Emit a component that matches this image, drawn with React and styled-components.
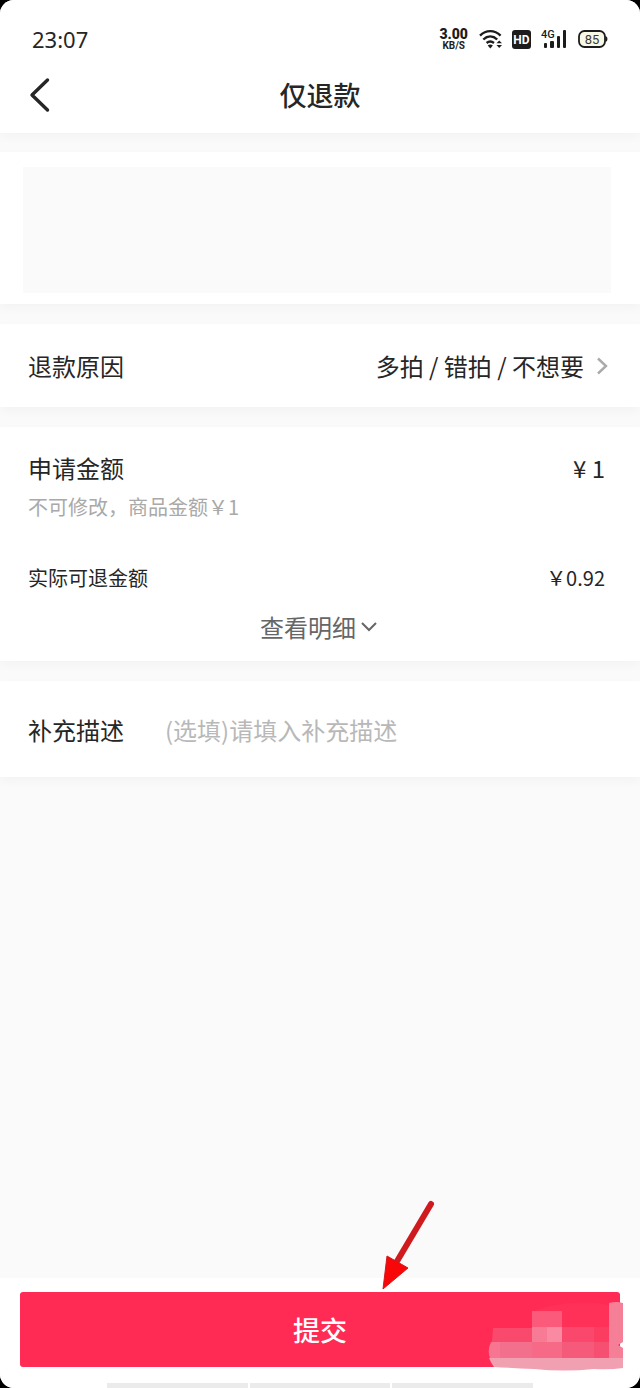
import styled, { createGlobalStyle } from "styled-components";

const GlobalStyle = createGlobalStyle`
  *, *::before, *::after {
    box-sizing: border-box;
  }

  body {
    margin: 0;
    background-color: #000;
    font-family: "Noto Sans CJK SC", "Noto Sans", sans-serif;
    color: #262626;
  }

  button, input {
    font: inherit;
    color: inherit;
    border: 0;
    padding: 0;
    background: none;
  }
`;

const Screen = styled.div`
  min-height: 100vh;
  display: flex;
  flex-direction: column;
  background-color: #fafafa;
  border-radius: 14px;
  overflow: hidden;
`;

const Header = styled.header`
  background-color: #fff;
  box-shadow: 0 4px 10px rgba(0, 0, 0, 0.03);
`;

const StatusBar = styled.div`
  display: flex;
  align-items: center;
  justify-content: space-between;
  padding: 22px 32px 0;
  height: 56px;
`;

const Clock = styled.time`
  font-family: "Noto Sans", sans-serif;
  font-size: 22px;
  line-height: 30px;
`;

const StatusIcons = styled.div`
  display: flex;
  align-items: center;
  gap: 10px;

  svg {
    display: block;
  }
`;

const Speed = styled.div`
  display: flex;
  flex-direction: column;
  align-items: center;
  font-family: Roboto, sans-serif;
  font-weight: 700;
  font-size: 10px;
  line-height: 10px;
  color: #1c1c1c;

  strong {
    font-size: 14px;
    line-height: 14px;
  }
`;

const TitleBar = styled.div`
  display: grid;
  grid-template-columns: 48px 1fr 48px;
  align-items: center;
  height: 77px;
  padding: 0 20px;
`;

const BackButton = styled.button`
  display: flex;
  align-items: center;
  height: 48px;
  padding-left: 8px;
  cursor: pointer;
`;

const Title = styled.h1`
  margin: 0;
  font-size: 27px;
  font-weight: 500;
  line-height: 40px;
  text-align: center;
`;

const Content = styled.main`
  flex: 1;
  display: flex;
  flex-direction: column;
  gap: 20px;
  padding-top: 19px;
`;

const Card = styled.section`
  background-color: #fff;
  padding: ${({ $padding }) => $padding};
  box-shadow: 0 4px 10px rgba(0, 0, 0, 0.03);
`;

const ProductBlank = styled.div`
  height: 126px;
  background-color: #fafafa;
`;

const ReasonRow = styled.button`
  display: flex;
  align-items: center;
  width: 100%;
  font-size: 24px;
  line-height: 36px;
  text-align: left;
  cursor: pointer;

  svg {
    margin-left: 12px;
  }
`;

const ReasonValue = styled.span`
  margin-left: auto;
`;

const AmountRow = styled.div`
  display: flex;
  justify-content: space-between;
  font-size: ${({ $small }) => ($small ? "20px" : "24px")};
  line-height: ${({ $small }) => ($small ? "30px" : "36px")};
`;

const Hint = styled.p`
  margin: 6px 0 41px;
  font-size: 20px;
  line-height: 30px;
  color: #a9a9a9;
`;

const DetailButton = styled.button`
  display: flex;
  align-items: center;
  gap: 5px;
  margin: 16px auto 0;
  padding-left: 4px;
  font-size: 24px;
  line-height: 36px;
  color: #666;
  cursor: pointer;
`;

const Field = styled.div`
  display: flex;
  align-items: center;
  gap: 41px;
  font-size: 24px;
  line-height: 36px;
`;

const FieldInput = styled.input`
  flex: 1;
  min-width: 0;
  height: 36px;
  outline: none;

  &::placeholder {
    color: #b8b8b8;
    opacity: 1;
  }
`;

const Footer = styled.footer`
  position: relative;
  background-color: #fff;
  padding: 14px 20px 0;
`;

const SubmitButton = styled.button`
  display: block;
  width: 100%;
  height: 75px;
  border-radius: 3px;
  background-color: #ff2b54;
  color: #fff;
  font-size: 27px;
  font-weight: 500;
  line-height: 40px;
  cursor: pointer;
`;

const NavHandle = styled.div`
  display: flex;
  gap: 2px;
  width: 71%;
  height: 5px;
  margin: 16px auto 0;

  span {
    flex: 1;
    background-color: #ebebeb;
  }
`;

// Marks lying over the footer.
const Arrow = styled.svg`
  position: absolute;
  left: 60%;
  top: -80px;
  margin-left: -4px;
  pointer-events: none;
`;

const Mosaic = styled.svg`
  position: absolute;
  right: 14px;
  top: 20px;
  pointer-events: none;
`;

const WifiIcon = () => (
  <svg width="24" height="20" viewBox="0 0 24 20" fill="none" stroke="#1c1c1c" strokeWidth="2.4" aria-hidden="true">
    <path d="M2 6.600C8 .6 16.500 .6 22.600 6.600" />
    <path d="M5.300 10.500C9.500 6.500 15 6.500 19.200 10.500" />
    <path d="M8.600 14C11 12 13.500 12 16 14" />
    <path d="M9.700 16.600Q12.300 14.600 14.900 16.600L12.300 19.400Z" fill="#1c1c1c" stroke="none" />
    <path d="M18.500 14.300L21.200 11.400L24 14.300ZM18.500 16L21.200 18.900L24 16Z" fill="#1c1c1c" stroke="none" />
  </svg>
);

const HdIcon = () => (
  <svg width="19" height="19" viewBox="0 0 19 19" aria-hidden="true">
    <rect width="19" height="19" rx="3" fill="#1c1c1c" />
    <text x="9.500" y="14" textAnchor="middle" fontFamily="Roboto, sans-serif" fontSize="12" fontWeight="700" fill="#fff">HD</text>
  </svg>
);

const SignalIcon = () => (
  <svg width="26" height="20" viewBox="0 0 26 20" fill="#1c1c1c" aria-hidden="true">
    <text x="0" y="9" fontFamily="Roboto, sans-serif" fontSize="11" fontWeight="500">4G</text>
    <rect x="3" y="14" width="3" height="5" rx="1" />
    <rect x="9" y="12" width="4" height="7" rx="1" />
    <rect x="16" y="7" width="3" height="12" rx="1" />
    <rect x="22" y="1" width="3" height="18" rx="1" />
  </svg>
);

const BatteryIcon = () => (
  <svg width="31" height="18" viewBox="0 0 31 18" aria-hidden="true">
    <rect x="2" y="1" width="26" height="16" rx="5.500" fill="#f8f8e6" stroke="#1c1c1c" strokeWidth="1.800" />
    <path d="M28.500 6Q30.500 6.500 30.500 9T28.500 12Z" fill="#1c1c1c" />
    <text x="15" y="13.500" textAnchor="middle" fontFamily="Roboto, sans-serif" fontSize="13" fill="#3c3c2c">85</text>
  </svg>
);

const App = () => (
  <>
    <GlobalStyle />
    <Screen>
      <Header>
        <StatusBar>
          <Clock>23:07</Clock>
          <StatusIcons>
            <Speed>
              <strong>3.00</strong>
              KB/S
            </Speed>
            <WifiIcon />
            <HdIcon />
            <SignalIcon />
            <BatteryIcon />
          </StatusIcons>
        </StatusBar>
        <TitleBar>
          <BackButton type="button" aria-label="返回">
            <svg width="24" height="36" viewBox="0 0 24 36" fill="none" stroke="#262626" strokeWidth="3.400" strokeLinecap="round" strokeLinejoin="round">
              <path d="M19.500 3L4 18L19.500 33" />
            </svg>
          </BackButton>
          <Title>仅退款</Title>
        </TitleBar>
      </Header>

      <Content>
        <Card $padding="15px 29px 11px 23px">
          <ProductBlank />
        </Card>

        <Card $padding="24px 32px 23px 28px">
          <ReasonRow type="button">
            <span>退款原因</span>
            <ReasonValue>多拍 / 错拍 / 不想要</ReasonValue>
            <svg width="12" height="18" viewBox="0 0 12 18" fill="none" stroke="#aaa" strokeWidth="2.400">
              <path d="M2 1.500L10 9L2 16.500" />
            </svg>
          </ReasonRow>
        </Card>

        <Card $padding="23px 35px 16px 28px">
          <AmountRow>
            <span>申请金额</span>
            <span>¥ 1</span>
          </AmountRow>
          <Hint>不可修改，商品金额￥1</Hint>
          <AmountRow $small>
            <span>实际可退金额</span>
            <span>￥0.92</span>
          </AmountRow>
          <DetailButton type="button">
            查看明细
            <svg width="16" height="12" viewBox="0 0 16 12" fill="none" stroke="#666" strokeWidth="2">
              <path d="M1 2L8 9L15 2" />
            </svg>
          </DetailButton>
        </Card>

        <Card $padding="31px 28px 29px">
          <Field>
            <label htmlFor="descripcion">补充描述</label>
            <FieldInput id="descripcion" type="text" placeholder="(选填)请填入补充描述" />
          </Field>
        </Card>
      </Content>

      <Footer>
        <SubmitButton type="submit">提交</SubmitButton>
        <NavHandle>
          <span />
          <span />
          <span />
        </NavHandle>

        <Arrow width="56" height="94" viewBox="0 0 56 94" aria-hidden="true">
          <path d="M51 6L16 65" stroke="#cf1a1e" strokeWidth="6" strokeLinecap="round" />
          <path d="M3 91L7 58L28 70Z" fill="#f80608" stroke="#cf1a1e" strokeWidth="1" />
        </Arrow>

        <Mosaic width="138" height="76" viewBox="0 0 138 76" aria-hidden="true">
          <path d="M44 13Q85 0 121 7V40H44Z" fill="#ff3159" />
          <path d="M5 30H44V44H4Z" fill="#f94a6d" />
          <path d="M44 13H74V29H44Z" fill="#fb5a7b" />
          <path d="M44 29H59V44H44Z" fill="#f87b95" />
          <path d="M59 29H74V44H59Z" fill="#f98aa2" />
          <path d="M74 29H106V44H74Z" fill="#f9486b" />
          <path d="M106 29H121V44H106Z" fill="#fb3d62" />
          <path d="M3 44H12V60H2Q-1 52 3 44Z" fill="#f77590" />
          <path d="M12 44H44V60H12Z" fill="#f3708c" />
          <path d="M44 44H74V60H44Z" fill="#f66a88" />
          <path d="M74 44H106V60H74Z" fill="#f55a7b" />
          <path d="M106 44H121V60H106Z" fill="#f74f72" />
          <path d="M121 5Q128 3 135 5V44L130 47L135 50V60H121Z" fill="#f67f98" />
          <path d="M1 60H135V70Q122 72 106 71Q76 74 46 71Q24 70 6 69Q3 65 1 60Z" fill="#f1a0b1" />
        </Mosaic>
      </Footer>
    </Screen>
  </>
);

export default App;
